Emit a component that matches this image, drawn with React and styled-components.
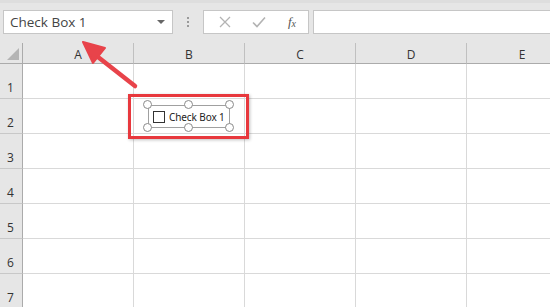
import React from 'react';
import styled, { createGlobalStyle } from 'styled-components';

const GlobalStyle = createGlobalStyle`
  html, body {
    margin: 0;
    padding: 0;
    background: #ffffff;
  }
  body {
    font-family: "Open Sans", "Liberation Sans", sans-serif;
  }
`;

const columns = ['A', 'B', 'C', 'D', 'E'];
const rows = [1, 2, 3, 4, 5, 6, 7];

const App = () => {
  return (
    <Page>
      <GlobalStyle />
      <FormulaBar>
        <NameBox>
          <span>Check Box 1</span>
          <Caret />
        </NameBox>
        <Grip>
          <i />
          <i />
          <i />
        </Grip>
        <ButtonGroup>
          <IconButton>
            <svg width="12" height="12" viewBox="0 0 12 12">
              <path d="M1 1 L11 11 M11 1 L1 11" stroke="#b3b3b3" strokeWidth="1.3" fill="none" />
            </svg>
          </IconButton>
          <IconButton>
            <svg width="14" height="12" viewBox="0 0 14 12">
              <path d="M1 6.5 L5 10.5 L13 1.5" stroke="#b3b3b3" strokeWidth="1.6" fill="none" />
            </svg>
          </IconButton>
          <Fx>
            f<sub>x</sub>
          </Fx>
        </ButtonGroup>
        <FormulaInput />
      </FormulaBar>

      <Sheet>
        <Corner>
          <CornerTriangle />
        </Corner>
        {columns.map((c) => (
          <ColHeader key={c}>{c}</ColHeader>
        ))}
        {rows.map((r) => (
          <React.Fragment key={r}>
            <RowHeader>{r}</RowHeader>
            {columns.map((c) => (
              <Cell key={c} />
            ))}
          </React.Fragment>
        ))}
      </Sheet>

      <Highlight />
      <Control>
        <ControlFrame>
          <Box />
          <ControlLabel>Check Box 1</ControlLabel>
        </ControlFrame>
        <Handle $x={0} $y={0} />
        <Handle $x={50} $y={0} />
        <Handle $x={100} $y={0} />
        <Handle $x={0} $y={100} />
        <Handle $x={50} $y={100} />
        <Handle $x={100} $y={100} />
      </Control>

      <Arrow width="70" height="60" viewBox="0 0 70 60">
        <path d="M62 53 L25 24" stroke="#e8434a" strokeWidth="4.5" strokeLinecap="round" fill="none" />
        <path d="M10 9 L32 15 L20 30 Z" fill="#e8434a" stroke="#e8434a" strokeWidth="2" strokeLinejoin="round" />
      </Arrow>
    </Page>
  );
};

export default App;

const Page = styled.div`
  position: relative;
  width: 550px;
  height: 307px;
  overflow: hidden;
  background: #ffffff;
`;

const FormulaBar = styled.div`
  height: 43px;
  box-sizing: border-box;
  display: flex;
  align-items: flex-start;
  padding: 7px 0 0 3px;
  background: #e6e6e6;
  border-top: 3px solid #dedede;
`;

const NameBox = styled.div`
  width: 170px;
  height: 24px;
  box-sizing: border-box;
  background: #ffffff;
  border: 1px solid #c6c6c6;
  display: flex;
  align-items: center;
  justify-content: space-between;
  padding: 0 7px 0 6px;
  font-size: 13.5px;
  color: #444444;
`;

const Caret = styled.div`
  width: 0;
  height: 0;
  border-left: 4px solid transparent;
  border-right: 4px solid transparent;
  border-top: 4px solid #666666;
`;

const Grip = styled.div`
  width: 30px;
  height: 24px;
  display: flex;
  flex-direction: column;
  align-items: center;
  justify-content: center;
  gap: 2px;

  & i {
    width: 2px;
    height: 2px;
    background: #9a9a9a;
  }
`;

const ButtonGroup = styled.div`
  width: 106px;
  height: 24px;
  box-sizing: border-box;
  background: #ffffff;
  border: 1px solid #c6c6c6;
  display: flex;
  align-items: center;
  padding: 0 6px 0 11px;
  justify-content: space-between;
`;

const IconButton = styled.div`
  width: 20px;
  display: flex;
  justify-content: center;
`;

const Fx = styled.div`
  font-family: "Liberation Serif", serif;
  font-style: italic;
  font-size: 13px;
  color: #555555;
  width: 20px;
  text-align: center;

  & sub {
    font-size: 10px;
    vertical-align: -1px;
  }
`;

const FormulaInput = styled.div`
  flex: 1;
  height: 24px;
  margin-left: 4px;
  box-sizing: border-box;
  background: #ffffff;
  border: 1px solid #c6c6c6;
  border-right: none;
`;

const Sheet = styled.div`
  display: grid;
  grid-template-columns: 23px repeat(5, 111px);
  grid-template-rows: 21px repeat(7, 35px);
  background: #ffffff;
`;

const Corner = styled.div`
  position: relative;
  background: #e6e6e6;
  border-right: 1px solid #ababab;
  border-bottom: 1px solid #ababab;
  box-sizing: border-box;
`;

const CornerTriangle = styled.div`
  position: absolute;
  right: 3px;
  bottom: 3px;
  width: 0;
  height: 0;
  border-left: 12px solid transparent;
  border-bottom: 12px solid #b4b4b4;
`;

const ColHeader = styled.div`
  background: #e6e6e6;
  box-sizing: border-box;
  border-right: 1px solid #c0c0c0;
  border-bottom: 1px solid #ababab;
  display: flex;
  align-items: center;
  justify-content: center;
  font-size: 12px;
  color: #333333;
  padding-top: 2px;
`;

const RowHeader = styled.div`
  background: #e6e6e6;
  box-sizing: border-box;
  border-right: 1px solid #ababab;
  border-bottom: 1px solid #c8c8c8;
  display: flex;
  align-items: flex-end;
  padding: 0 0 2px 7px;
  font-size: 12px;
  color: #333333;
`;

const Cell = styled.div`
  box-sizing: border-box;
  border-right: 1px solid #d9d9d9;
  border-bottom: 1px solid #d9d9d9;
`;

const Highlight = styled.div`
  position: absolute;
  left: 128px;
  top: 94px;
  width: 121px;
  height: 45px;
  box-sizing: border-box;
  border: 3px solid #e8383d;
  box-shadow: 1px 1px 3px rgba(0, 0, 0, 0.25);
`;

const Control = styled.div`
  position: absolute;
  left: 148px;
  top: 105px;
  width: 82px;
  height: 23px;
`;

const ControlFrame = styled.div`
  position: absolute;
  inset: 0;
  border: 1px solid #a0a0a0;
  display: flex;
  align-items: center;
  padding-left: 4px;
  gap: 4px;
  background: #ffffff;
`;

const Box = styled.div`
  flex-shrink: 0;
  width: 10px;
  height: 10px;
  border: 1px solid #333333;
  background: #ffffff;
`;

const ControlLabel = styled.span`
  font-family: "Noto Sans", "Open Sans", sans-serif;
  font-size: 10px;
  letter-spacing: -0.1px;
  color: #222222;
  white-space: nowrap;
`;

const Handle = styled.div`
  position: absolute;
  left: ${({ $x }) => $x}%;
  top: ${({ $y }) => $y}%;
  width: 7px;
  height: 7px;
  margin: -5px 0 0 -5px;
  border-radius: 50%;
  background: #ffffff;
  border: 1.5px solid #8a8a8a;
`;

const Arrow = styled.svg`
  position: absolute;
  left: 73px;
  top: 33px;
`;
